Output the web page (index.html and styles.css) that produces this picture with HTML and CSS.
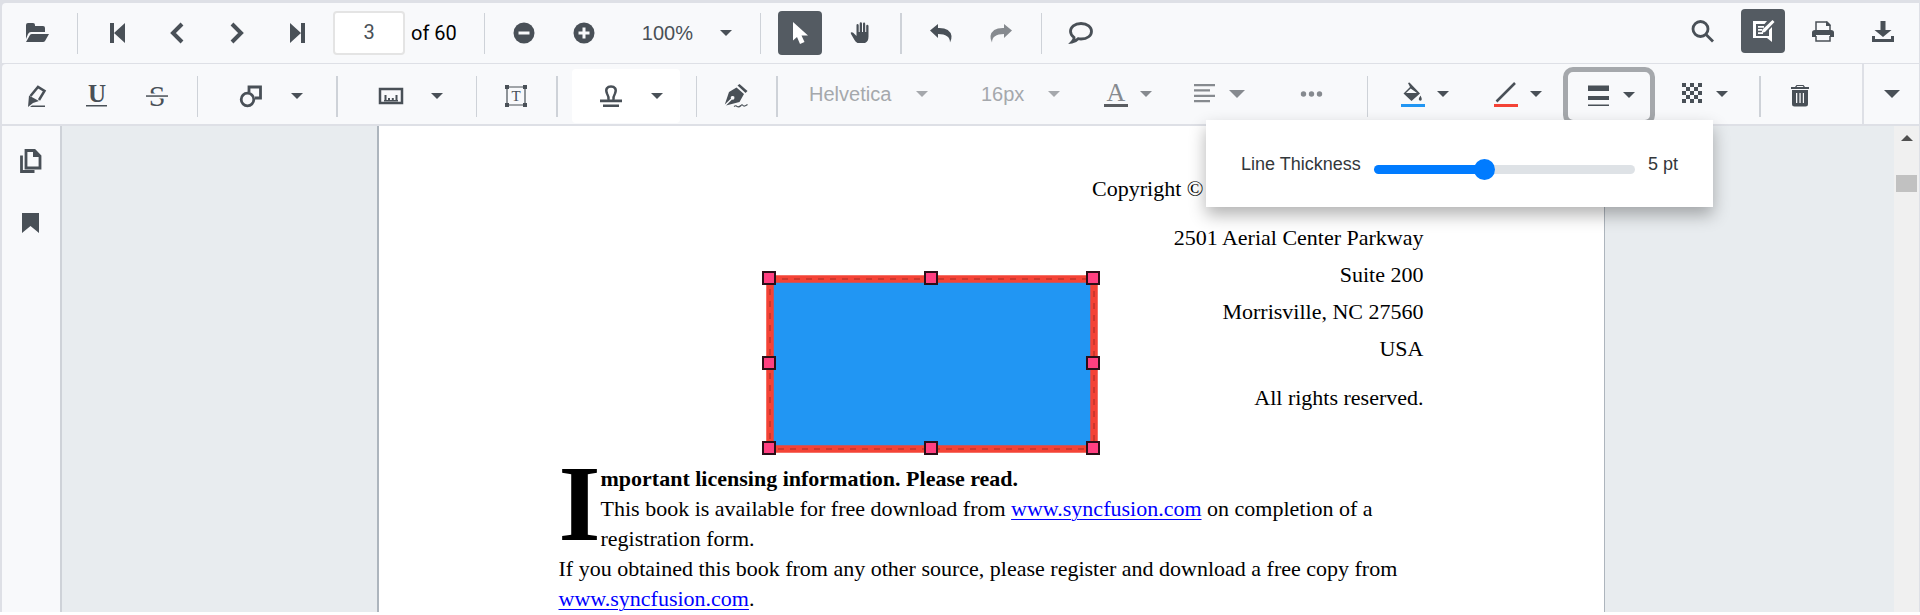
FILE: index.html
```html
<!DOCTYPE html>
<html lang="en">

<head>
    <meta charset="UTF-8" />
    <meta name="viewport" content="width=device-width, initial-scale=1.0" />
    <title>PDF Viewer</title>
    <link rel="stylesheet" href="styles.css">
</head>

<body>

    <div class="viewer">

        <!-- main toolbar -->
        <div class="toolbar" role="toolbar" aria-label="Viewer">
            <button class="tool" aria-label="Open">
                <svg class="icon" viewBox="0 0 24 24"><path d="M1 18V4q0-2 2-2h5q2 0 2 2v1h8q2 0 2 2v4H6q-2 0-3 2z" /><path d="M1 21l4-7q.5-1 2-1h17l-4 7q-.6 1-2 1z" /></svg>
            </button>
            <span class="sep"></span>
            <button class="tool" aria-label="First page">
                <svg class="icon" viewBox="0 0 24 24"><path d="M5 2h4v20H5zM20 2v20L9 12z" /></svg>
            </button>
            <button class="tool" aria-label="Previous page">
                <svg class="icon line-4" viewBox="0 0 24 24"><path d="M17 3l-9 9 9 9" /></svg>
            </button>
            <button class="tool" aria-label="Next page">
                <svg class="icon line-4" viewBox="0 0 24 24"><path d="M7 3l9 9-9 9" /></svg>
            </button>
            <button class="tool" aria-label="Last page">
                <svg class="icon" viewBox="0 0 24 24"><path d="M16 2h4v20h-4zM5 2v20l11-10z" /></svg>
            </button>
            <input class="page-input" id="page" type="text" value="3">
            <label class="page-total" for="page">of 60</label>
            <span class="sep"></span>
            <button class="tool" aria-label="Zoom out">
                <svg class="icon" viewBox="0 0 24 24"><circle cx="12" cy="12" r="10.5" /><path class="light" d="M6.500 10.500h11v3h-11z" /></svg>
            </button>
            <button class="tool" aria-label="Zoom in">
                <svg class="icon" viewBox="0 0 24 24"><circle cx="12" cy="12" r="10.500" /><path class="light" d="M6.500 10.500h4v-4h3v4h4v3h-4v4h-3v-4h-4z" /></svg>
            </button>
            <div class="drop zoom">
                <select aria-label="Zoom">
                    <option>100%</option>
                </select>
                <span class="caret"></span>
            </div>
            <span class="sep"></span>
            <button class="tool active" aria-label="Select">
                <svg class="icon" viewBox="0 0 24 24"><path d="M5 1v18.500l4-3.500 3 7 4.500-2-3-6.500H20z" /></svg>
            </button>
            <button class="tool" aria-label="Pan">
                <svg class="icon" viewBox="0 0 24 24"><path d="M8 22q-2-1-3-3l-3.500-6Q.7 11.500 2 11.300q1.500-.3 3 1.700l2 2V4.200q0-1.200 1-1.200t1.200 1.200V11h1V2.500q0-1.300 1.100-1.300t1.200 1.300V11h1V2.800q0-1.300 1.100-1.300T15.700 2.800V11h1V5q0-1.200 1.100-1.200T19 5v10.500q0 5-3.500 6.500z" transform="translate(1.500)" /></svg>
            </button>
            <span class="sep wide"></span>
            <button class="tool" aria-label="Undo">
                <svg class="icon" viewBox="0 0 24 24"><path d="M1 9.500L9 3v4q12-.5 13.500 8 .3 3.500-1.500 6.500 0-8.500-12-8.500v4z" /></svg>
            </button>
            <button class="tool" aria-label="Redo" disabled>
                <svg class="icon" viewBox="0 0 24 24"><path d="M23 9.500L15 3v4Q3 6.500 1.500 15q-.3 3.500 1.500 6.500 0-8.500 12-8.500v4z" /></svg>
            </button>
            <span class="sep"></span>
            <button class="tool" aria-label="Comments">
                <svg class="icon line-3" viewBox="0 0 24 24"><path d="M12 2.500c6.500 0 10.500 3.500 10.500 7.800S18.500 18 12 18q-1.500 0-2.800-.3-2.200 2.800-6.200 3.300 2.500-2.500 2-4.700-3.500-2.300-3.500-6C1.500 6 5.500 2.500 12 2.500z" /></svg>
            </button>

            <div class="toolbar-end">
                <button class="tool" aria-label="Search">
                    <svg class="icon line-3" viewBox="0 0 24 24"><circle cx="9.500" cy="10" r="7.500" /><path d="M15 15.500l7 7" /></svg>
                </button>
                <button class="tool active" aria-label="Annotations">
                    <svg class="icon" viewBox="0 0 24 24"><path d="M2 2h14l-2.500 3H5v12h13v-6l3-3v15l-5-4H2z" /><path d="M7 7h6v1.800H7zM7 10h4v1.800H7zM7 13.200h5V15H7z" /><path d="M21.500 1l2 2-9.500 10-3.500 1 1-3.500z" /></svg>
                </button>
                <button class="tool" aria-label="Print">
                    <svg class="icon" viewBox="0 0 24 24"><path class="outline" d="M5 11V3h11l3 3v5M5 17v5h14v-5" /><path d="M4 11h16q3 0 3 2.500V18h-4v-2H5v2H1v-4.500Q1 11 4 11zM15 2l5 5h-5z" /></svg>
                </button>
                <button class="tool" aria-label="Download">
                    <svg class="icon" viewBox="0 0 24 24"><path d="M9.500 2h5v9h6L12 18l-8.500-7h6zM1 17h3v3h16v-3h3v6H1z" /></svg>
                </button>
            </div>
        </div>

        <!-- annotation toolbar -->
        <div class="toolbar annotation" role="toolbar" aria-label="Annotation">
            <button class="tool" aria-label="Highlight">
                <svg class="icon" viewBox="0 0 24 24"><path class="outline thick" d="M5.500 12L13 3l6.500 4-5.500 9" /><path d="M4 11.500l10 5.500-6 2-5 4zM7 21.500h13V23H5z" /></svg>
            </button>
            <button class="tool" aria-label="Underline">
                <svg class="icon" viewBox="0 0 24 24"><text class="glyph bold" x="12" y="18" font-size="25">U</text><path d="M1 21h21v1.500H1z" /></svg>
            </button>
            <button class="tool" aria-label="Strikethrough">
                <svg class="icon" viewBox="0 0 24 24"><text class="glyph" x="12" y="22" font-size="30">S</text><path class="bar-gap" d="M1 9.500h22v5H1z" /><path d="M1 11.300h22v1.500H1z" /></svg>
            </button>
            <span class="sep"></span>
            <div class="split">
                <button class="split-main" aria-label="Shapes">
                    <svg class="icon line-3" viewBox="0 0 24 24"><circle cx="8.500" cy="15.500" r="6.300" /><path d="M10 8V3h11.500v11H16" /></svg>
                </button>
                <button class="split-arrow" aria-label="Shape list"><span class="caret"></span></button>
            </div>
            <span class="sep wide"></span>
            <div class="split">
                <button class="split-main" aria-label="Measure">
                    <svg class="icon" viewBox="0 0 24 24"><path class="outline thick" d="M1 5h22v14H1z" /><path d="M5.500 11h2v6h-2zM9 14h2v3H9zM12.800 14h2v3h-2zM16.500 11h2v6h-2zM5 16h14v1.500H5z" /></svg>
                </button>
                <button class="split-arrow" aria-label="Measure list"><span class="caret"></span></button>
            </div>
            <span class="sep"></span>
            <button class="tool" aria-label="Free text">
                <svg class="icon" viewBox="0 0 24 24"><path class="outline thin" d="M3 3h18v18H3z" /><path d="M1 1h4v4H1zM19 1h4v4h-4zM1 19h4v4H1zM19 19h4v4h-4z" /><text class="glyph" x="12" y="16.500" font-size="15">T</text></svg>
            </button>
            <span class="sep wide"></span>
            <div class="split hover">
                <button class="split-main" aria-label="Stamp">
                    <svg class="icon" viewBox="0 0 24 24"><path class="outline thick" d="M9.500 16q.5-3-1.500-6.500C6 5 8.500 2.500 12 2.500S18 5 16 9.500q-2 3.500-1.500 6.500" /><path d="M1 15.500h22v2.700H1zM4 20.500h16V23H4z" /></svg>
                </button>
                <button class="split-arrow" aria-label="Stamp list"><span class="caret"></span></button>
            </div>
            <span class="sep"></span>
            <button class="tool" aria-label="Signature">
                <svg class="icon" viewBox="0 0 24 24"><path d="M13.500 1.500l2-1.500 8 7-2 2z" /><path fill-rule="evenodd" d="M12.500 3.500l7.500 6.500-4.500 8L2 21.500 8 15.500A1.800 1.800 0 1 0 7 14.500L.8 20.500 5 8z" /><path class="outline thin" d="M10 22.500q2-1.500 3 0 2 1 4-1 1-1.500 2 0t4.500-1" /></svg>
            </button>
            <span class="sep wide"></span>
            <div class="drop font-name">
                <select aria-label="Font family" disabled>
                    <option>Helvetica</option>
                </select>
                <span class="caret"></span>
            </div>
            <div class="drop font-size">
                <select aria-label="Font size" disabled>
                    <option>16px</option>
                </select>
                <span class="caret"></span>
            </div>
            <button class="picker" aria-label="Font color" disabled>
                <svg class="icon" viewBox="0 0 24 24"><text class="glyph" x="12" y="18" font-size="26">A</text><path class="swatch-text" d="M0 21h24v3H0z" /></svg>
                <span class="caret"></span>
            </button>
            <button class="picker align" aria-label="Text align" disabled>
                <svg class="icon" viewBox="0 0 24 24"><path d="M1 1h21v2.300H1zM1 6.300h16v2.300H1zM1 11.700h21V14H1zM1 17h16v2.300H1z" /></svg>
                <span class="caret big"></span>
            </button>
            <button class="tool more" aria-label="Text properties" disabled>
                <svg class="icon" viewBox="0 0 24 24"><circle cx="3.500" cy="10" r="2.700" /><circle cx="11.500" cy="10" r="2.700" /><circle cx="19.500" cy="10" r="2.700" /></svg>
            </button>
            <span class="sep"></span>
            <button class="picker" aria-label="Fill color">
                <svg class="icon" viewBox="0 0 24 24"><path d="M7 0l1.500-.5L19 10.500 10.500 18 2.500 10.500 9 4zM9.700 5.500L5 10h11z" fill-rule="evenodd" /><path d="M19.500 12.500q2.500 5 0 5.300-3.500-.3 0-5.300z" /><path class="swatch-fill" d="M0 21h24v3H0z" /></svg>
                <span class="caret"></span>
            </button>
            <button class="picker" aria-label="Stroke color">
                <svg class="icon" viewBox="0 0 24 24"><path class="outline thick" d="M2.500 18.500L21 0" /><path class="swatch-stroke" d="M0 21h24v3H0z" /></svg>
                <span class="caret"></span>
            </button>
            <div class="thickness">
                <button class="picker focused" aria-label="Line thickness">
                    <svg class="icon" viewBox="0 0 24 24"><path d="M1 1.500h21V7H1zM1 12h21v4H1zM1 20.500h21V22H1z" /></svg>
                    <span class="caret"></span>
                </button>
                <div class="popup">
                    <label for="thickness">Line Thickness</label>
                    <input class="slider" id="thickness" type="range" min="0" max="12" value="5">
                    <output for="thickness">5 pt</output>
                </div>
            </div>
            <button class="picker" aria-label="Opacity">
                <svg class="icon" viewBox="0 0 24 24"><path d="M2 0h4v4H2zM10 0h4v4h-4zM18 0h4v4h-4zM6 4h4v4H6zM14 4h4v4h-4zM2 8h4v4H2zM10 8h4v4h-4zM18 8h4v4h-4zM6 12h4v4H6zM14 12h4v4h-4zM2 16h4v4H2zM10 16h4v4h-4zM18 16h4v4h-4z" /></svg>
                <span class="caret"></span>
            </button>
            <span class="sep wide"></span>
            <button class="tool" aria-label="Delete">
                <svg class="icon" viewBox="0 0 24 24"><path d="M3 3h4l1.500-2h7L17 3h4v2H3zM8.500 3h7l-.7-1H9.200z" fill-rule="evenodd" /><path d="M4 6h16v14q0 2.500-2.500 2.500h-11Q4 22.500 4 20zM8 9v10h1.300V9zM11.400 9v10h1.300V9zM14.800 9v10H16V9z" fill-rule="evenodd" /></svg>
            </button>
            <button class="overflow" aria-label="More tools"><span class="caret big"></span></button>
        </div>

        <div class="content">
            <div class="sidebar">
                <button class="tool" aria-label="Thumbnails">
                    <svg class="icon line-3" viewBox="0 0 24 24"><path d="M7 1.500h8.500L21 7v12H7z" /><path d="M2.500 6.500v16h13" /><path class="solid" d="M14 1v7h7z" /></svg>
                </button>
                <button class="tool" aria-label="Bookmarks">
                    <svg class="icon" viewBox="0 0 24 24"><path d="M3 2h17v20l-8.500-7L3 22z" /></svg>
                </button>
            </div>

            <div class="document">
                <div class="page">
                    <div class="imprint">
                        <p class="copyright">Copyright ©</p>
                        <p>2501 Aerial Center Parkway</p>
                        <p>Suite 200</p>
                        <p>Morrisville, NC 27560</p>
                        <p class="country">USA</p>
                        <p>All rights reserved.</p>
                    </div>
                    <div class="license">
                        <span class="drop-cap">I</span><strong>mportant licensing information. Please read.</strong><br>
                        This book is available for free download from <a href="#">www.syncfusion.com</a> on completion of a registration form.
                        <p>If you obtained this book from any other source, please register and download a free copy from <a href="#">www.syncfusion.com</a>.</p>
                    </div>

                    <!-- selected rectangle annotation -->
                    <svg class="shape" width="340" height="190" viewBox="0 0 340 190">
                        <rect class="shape-body" x="10" y="9" width="324" height="170" />
                        <rect class="shape-guide" x="10" y="9" width="324" height="170" />
                        <g class="handles">
                            <rect x="3" y="2" width="12" height="12" />
                            <rect x="165" y="2" width="12" height="12" />
                            <rect x="327" y="2" width="12" height="12" />
                            <rect x="3" y="87" width="12" height="12" />
                            <rect x="327" y="87" width="12" height="12" />
                            <rect x="3" y="172" width="12" height="12" />
                            <rect x="165" y="172" width="12" height="12" />
                            <rect x="327" y="172" width="12" height="12" />
                        </g>
                    </svg>
                </div>
            </div>

            <div class="scrollbar">
                <span class="scroll-up"></span>
                <span class="scroll-thumb"></span>
            </div>
        </div>
    </div>

</body>

</html>
```
FILE: styles.css
```css
* {
    box-sizing: border-box;
}

body {
    margin: 0;
    height: 100vh;
    padding-bottom: 3px;
    overflow: hidden;
    background-color: #fff;
    font-family: "Liberation Sans", Arial, sans-serif;
    color: #495057;
}

button,
select,
input {
    font-family: inherit;
    color: inherit;
}

button {
    padding: 0;
    border: none;
    background: none;
    cursor: pointer;
}

.viewer {
    display: flex;
    flex-direction: column;
    height: 100%;
    border: solid #dee0e6;
    border-width: 3px 1px 0 2px;
    background-color: #dee0e6;
}

/* toolbars */

.toolbar {
    display: flex;
    flex: none;
    align-items: center;
    height: 60px;
    padding: 0 6px 0 5px;
    border-radius: 4px 0 0 0;
    background-color: #f8f9fb;
}

.toolbar.annotation {
    position: relative;
    z-index: 2;
    margin: 1px 0 2px;
    padding: 4px 0 0 5px;
}

.toolbar-end {
    display: flex;
    margin-left: auto;
    padding-bottom: 4px;
}

.tool {
    display: flex;
    flex: none;
    align-items: center;
    justify-content: center;
    width: 44px;
    height: 44px;
    margin: 0 8px;
    border-radius: 4px;
}

.tool.active {
    background-color: #545b62;
    color: #fff;
}

button:disabled {
    color: #868a8f;
}

.icon {
    display: block;
    flex: none;
    width: 24px;
    height: 24px;
    overflow: visible;
    fill: currentColor;
}

.line-3,
.line-4 {
    fill: none;
    stroke: currentColor;
    stroke-width: 2.8;
}

.line-4 {
    stroke-width: 4;
}

.outline {
    fill: none;
    stroke: currentColor;
    stroke-width: 1.5;
}

.outline.thick {
    stroke-width: 2.5;
}

.outline.thin {
    stroke-width: 1.2;
}

.solid {
    fill: currentColor;
    stroke: none;
}

.light,
.bar-gap {
    fill: #f8f9fb;
}

.glyph {
    font-family: "Liberation Serif", serif;
    text-anchor: middle;
}

.glyph.bold {
    font-weight: bold;
}

.swatch-text {
    fill: #5a5d61;
}

.swatch-fill {
    fill: #2196f3;
}

.swatch-stroke {
    fill: #f44336;
}

.sep {
    flex: none;
    width: 1px;
    height: 41px;
    margin: 0 9px 0 10px;
    background-color: #ced2d8;
}

.sep.wide {
    width: 2px;
}

.caret {
    flex: none;
    border: solid transparent;
    border-width: 6px 6px 0;
    border-top-color: currentColor;
}

.caret.big {
    border-width: 8px 8px 0;
    border-top-color: currentColor;
}

.page-input {
    width: 72px;
    height: 44px;
    margin-left: 6px;
    padding: 0 0 2px;
    border: 2px solid #e4e4e4;
    border-radius: 4px;
    background-color: #fff;
    font-family: Roboto, sans-serif;
    font-size: 20px;
    text-align: center;
}

.page-total {
    margin: 0 17px 0 6px;
    font-family: Roboto, sans-serif;
    font-size: 20px;
    color: #000;
}

.drop {
    display: flex;
    flex: none;
    align-items: center;
    height: 44px;
    font-size: 20px;
}

.drop select {
    flex: 1;
    min-width: 0;
    height: 44px;
    padding: 0;
    border: none;
    appearance: none;
    background: none;
    font-size: 20px;
}

.drop select:disabled,
.drop select:disabled + .caret {
    color: #a5a8ac;
    opacity: 1;
}

.zoom {
    width: 136px;
    padding: 0 18px 0 28px;
}

.font-name {
    width: 160px;
    padding: 0 19px 4px 22px;
}

.font-size {
    width: 133px;
    padding: 0 20px 4px 34px;
}

.split {
    display: flex;
    flex: none;
    width: 108px;
    height: 54px;
    margin: 0 6px 0 5px;
    border-radius: 4px;
}

.split.hover {
    background-color: #fff;
}

.split-main,
.split-arrow {
    display: flex;
    align-items: center;
    justify-content: center;
}

.split-main {
    width: 62px;
    padding-left: 16px;
}

.split-arrow {
    width: 45px;
}

.picker {
    display: flex;
    flex: none;
    align-items: center;
    gap: 12px;
    width: 93px;
    height: 56px;
    padding: 0 0 3px 24px;
}

.picker .caret {
    margin-bottom: 2px;
}

.picker.align {
    width: 100px;
    padding-left: 20px;
}

.more {
    margin: 0 23px 0 17px;
}

.thickness {
    position: relative;
}

.picker.focused {
    width: 92px;
    height: 58px;
    margin-right: 1px;
    padding: 0 0 0 19px;
    border: 5px solid #a5a8ac;
    border-radius: 10px;
}

.overflow {
    display: flex;
    align-items: center;
    justify-content: center;
    align-self: stretch;
    width: 57px;
    margin: -4px 0 0 auto;
    border-left: 2px solid #dee0e6;
}

/* line thickness popup */

.popup {
    position: absolute;
    top: 53px;
    right: -57px;
    display: flex;
    align-items: center;
    gap: 13px;
    width: 507px;
    height: 87px;
    padding: 0 35px;
    background-color: #fff;
    box-shadow: 0 8px 16px rgba(0, 0, 0, 0.3);
    font-size: 18px;
    color: #33373b;
    white-space: nowrap;
}

.popup label,
.popup output {
    padding-top: 2px;
}

.slider {
    flex: 1;
    min-width: 0;
    height: 21px;
    margin: 12px 0 0;
    appearance: none;
    background: none;
}

.slider::-webkit-slider-runnable-track {
    height: 9px;
    border-radius: 5px;
    background: linear-gradient(to right, #007bff 42%, #dee2e6 42%);
}

.slider::-webkit-slider-thumb {
    appearance: none;
    width: 21px;
    height: 21px;
    margin-top: -6px;
    border-radius: 50%;
    background-color: #007bff;
}

/* document area */

.content {
    display: flex;
    flex: 1;
    min-height: 0;
}

.sidebar {
    flex: none;
    width: 60px;
    padding-top: 13px;
    border-right: 2px solid #ced2d8;
    background-color: #f8f9fb;
}

.sidebar .tool {
    margin-bottom: 18px;
    margin-left: 7px;
}

.document {
    display: flex;
    flex: 1;
    justify-content: center;
    padding-left: 25px;
    overflow: hidden;
    background-color: #e8ecef;
}

.page {
    position: relative;
    flex: none;
    width: 1228px;
    padding: 44px 180px 0;
    border-left: 2px solid #adb5bd;
    border-right: 1px solid #adb5bd;
    background-color: #fff;
    font-family: "Liberation Serif", "Times New Roman", serif;
    font-size: 22px;
    color: #000;
}

.page p {
    margin: 0;
}

.page a {
    color: #00f;
    text-decoration-thickness: 1px;
    text-underline-offset: 3px;
}

.imprint {
    line-height: 37px;
    text-align: right;
}

.imprint .copyright {
    margin-bottom: 12px;
    padding-right: 220px;
}

.imprint .country {
    margin-bottom: 12px;
}

.license {
    margin-top: 48px;
    line-height: 30px;
}

.drop-cap {
    float: left;
    font-size: 108px;
    font-weight: bold;
    line-height: 79px;
}

.shape {
    position: absolute;
    top: 144px;
    left: 381px;
}

.shape-body {
    fill: #2196f3;
    stroke: #f44336;
    stroke-width: 7.5;
}

.shape-guide {
    fill: none;
    stroke: #a62c24;
    stroke-dasharray: 6 6;
}

.handles {
    fill: #ff4081;
    stroke: #2b0f18;
    stroke-width: 2;
}

.scrollbar {
    display: flex;
    flex: none;
    flex-direction: column;
    align-items: center;
    gap: 34px;
    width: 25px;
    padding-top: 9px;
    background-color: #f0f0f0;
}

.scroll-up {
    border: solid transparent;
    border-width: 0 6px 6px;
    border-bottom-color: #505050;
}

.scroll-thumb {
    width: 21px;
    height: 17px;
    background-color: #c1c1c1;
}
```
